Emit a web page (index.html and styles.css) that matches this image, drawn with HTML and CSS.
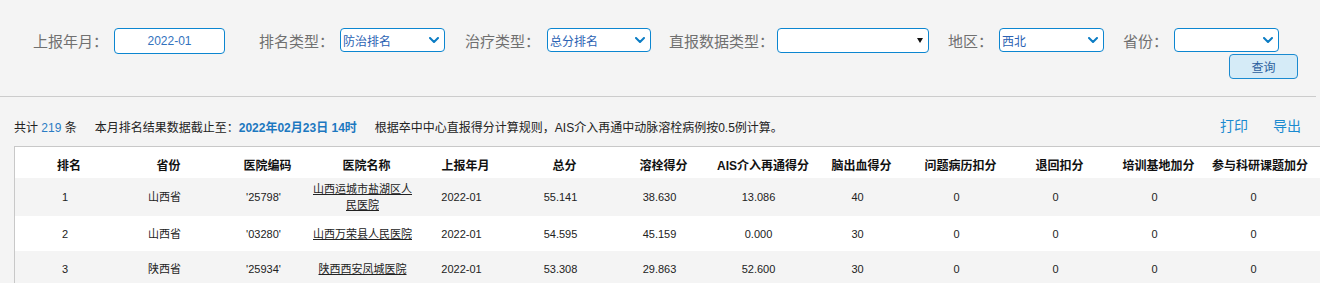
FILE: index.html
```html
<!DOCTYPE html>
<html lang="zh-CN">
<head>
<meta charset="utf-8">
<title>排名</title>
<link rel="stylesheet" href="styles.css">
</head>
<body>
<div class="filters">
  <div class="filter-row">
    <div class="field f1">
      <span class="label">上报年月：</span>
      <div class="input">2022-01</div>
    </div>
    <div class="field f2">
      <span class="label">排名类型：</span>
      <div class="select"><span class="sel-text">防治排名</span><svg class="chev" width="10" height="6" viewBox="0 0 10 6"><path d="M1 1 L5 5 L9 1" /></svg></div>
    </div>
    <div class="field f3">
      <span class="label">治疗类型：</span>
      <div class="select"><span class="sel-text">总分排名</span><svg class="chev" width="10" height="6" viewBox="0 0 10 6"><path d="M1 1 L5 5 L9 1" /></svg></div>
    </div>
    <div class="field f4">
      <span class="label">直报数据类型：</span>
      <div class="select select-wide"><span class="sel-text"></span><svg class="tri" width="6" height="5" viewBox="0 0 6 5"><polygon points="0,0 6,0 3,5" /></svg></div>
    </div>
    <div class="field f5">
      <span class="label">地区：</span>
      <div class="select"><span class="sel-text">西北</span><svg class="chev" width="10" height="6" viewBox="0 0 10 6"><path d="M1 1 L5 5 L9 1" /></svg></div>
    </div>
    <div class="field f6">
      <span class="label">省份：</span>
      <div class="select"><span class="sel-text"></span><svg class="chev" width="10" height="6" viewBox="0 0 10 6"><path d="M1 1 L5 5 L9 1" /></svg></div>
    </div>
  </div>
  <div class="btn-row"><button class="btn">查询</button></div>
</div>

<div class="info">
  <span class="total">共计 <span class="num">219</span> 条</span>
  <span class="deadline">本月排名结果数据截止至：<b class="date">2022年02月23日 14时</b></span>
  <span class="rule">根据卒中中心直报得分计算规则，AIS介入再通中动脉溶栓病例按0.5例计算。</span>
  <span class="actions"><a class="act">打印</a><a class="act">导出</a></span>
</div>

<div class="table-wrap">
  <table class="rank">
    <colgroup>
      <col class="c-first">
      <col class="c"><col class="c"><col class="c"><col class="c"><col class="c"><col class="c">
      <col class="c"><col class="c"><col class="c"><col class="c"><col class="c"><col class="c">
      <col>
    </colgroup>
    <thead>
      <tr class="head">
        <th>排名</th><th>省份</th><th>医院编码</th><th>医院名称</th><th>上报年月</th><th>总分</th><th>溶栓得分</th><th>AIS介入再通得分</th><th>脑出血得分</th><th>问题病历扣分</th><th>退回扣分</th><th>培训基地加分</th><th>参与科研课题加分</th><th></th>
      </tr>
    </thead>
    <tbody>
      <tr class="odd">
        <td>1</td><td>山西省</td><td>'25798'</td><td><a class="hosp">山西运城市盐湖区人民医院</a></td><td>2022-01</td><td>55.141</td><td>38.630</td><td>13.086</td><td>40</td><td>0</td><td>0</td><td>0</td><td>0</td><td></td>
      </tr>
      <tr>
        <td>2</td><td>山西省</td><td>'03280'</td><td><a class="hosp">山西万荣县人民医院</a></td><td>2022-01</td><td>54.595</td><td>45.159</td><td>0.000</td><td>30</td><td>0</td><td>0</td><td>0</td><td>0</td><td></td>
      </tr>
      <tr class="odd">
        <td>3</td><td>陕西省</td><td>'25934'</td><td><a class="hosp">陕西西安凤城医院</a></td><td>2022-01</td><td>53.308</td><td>29.863</td><td>52.600</td><td>30</td><td>0</td><td>0</td><td>0</td><td>0</td><td></td>
      </tr>
    </tbody>
  </table>
</div>
</body>
</html>
```

FILE: styles.css
```css
html, body {
  margin: 0;
  padding: 0;
  overflow: hidden;
}
body {
  background: #f4f4f4;
  font-family: "Liberation Sans", "Noto Sans CJK SC", sans-serif;
  color: #333;
}

/* ---------- filters ---------- */
.filters {
  padding: 28px 18px 17px 0;
  margin-right: 4px;
  border-bottom: 1px solid #cccccc;
}
.filter-row {
  display: flex;
  align-items: flex-start;
  padding-left: 33px;
  height: 26px;
}
.field {
  display: flex;
  align-items: flex-start;
  gap: 6px;
}
.f2 { margin-left: 34px; }
.f3 { margin-left: 20px; gap: 7px; }
.f4 { margin-left: 18px; gap: 3px; }
.f5 { margin-left: 19px; }
.f6 { margin-left: 19px; }

.label {
  font-family: "Noto Sans CJK TC", "Noto Sans CJK SC", sans-serif;
  font-size: 15px;
  line-height: 26px;
  color: #707070;
  white-space: nowrap;
}
.input {
  box-sizing: border-box;
  width: 111px;
  height: 26px;
  border: 1px solid #0c86d0;
  border-radius: 4px;
  background: #fff;
  font-size: 12px;
  line-height: 24px;
  text-align: center;
  color: #3272bd;
}
.select {
  box-sizing: border-box;
  width: 105px;
  height: 24px;
  border: 1px solid #0c86d0;
  border-radius: 4px;
  background: #fff;
  display: flex;
  align-items: center;
  justify-content: space-between;
  padding: 0 5px 0 2px;
}
.f3 .select { width: 104px; }
.select-wide {
  width: 152px;
  height: 25px;
  padding-right: 5px;
}
.sel-text {
  font-size: 12px;
  color: #2b62b3;
  white-space: nowrap;
}
.chev path {
  fill: none;
  stroke: #0b7cc4;
  stroke-width: 2;
  stroke-linecap: round;
  stroke-linejoin: round;
}
.tri polygon { fill: #111; }

.btn-row {
  display: flex;
  justify-content: flex-end;
}
.btn {
  box-sizing: border-box;
  width: 69px;
  height: 25px;
  border: 1px solid #1a8ad0;
  border-radius: 4px;
  background: #d5ebf7;
  color: #2c5f9e;
  font-family: "Liberation Sans", "Noto Sans CJK SC", sans-serif;
  font-size: 12px;
  padding: 0;
}

/* ---------- info ---------- */
.info {
  display: flex;
  align-items: center;
  height: 20px;
  padding: 21px 19px 0 14px;
  font-size: 12px;
  line-height: 20px;
  color: #222;
  white-space: nowrap;
}
.num { color: #2a7cc4; }
.deadline { margin-left: 18px; }
.date { color: #1c78c0; font-weight: bold; }
.rule { margin-left: 18px; }
.actions {
  margin-left: auto;
  align-self: flex-start;
  line-height: 16px;
  display: flex;
  gap: 25px;
}
.act {
  font-size: 14px;
  color: #1a8ad0;
  cursor: pointer;
}

/* ---------- table ---------- */
.table-wrap {
  margin: 8px 0 0 14px;
  border-top: 1px solid #c8c8c8;
  border-left: 1px solid #c8c8c8;
  background: #fff;
}
.rank {
  width: 100%;
  border-collapse: collapse;
  table-layout: fixed;
}
.c-first { width: 100px; }
.c { width: 99px; }
.head { height: 31px; }
.rank th {
  font-size: 12px;
  font-weight: bold;
  color: #111;
  text-align: center;
  white-space: nowrap;
  padding: 3px 0 0 8px;
  vertical-align: middle;
}
.rank tbody tr { height: 35px; }
.rank td {
  font-size: 11px;
  line-height: 16px;
  color: #222;
  text-align: center;
  padding: 3px 0;
  vertical-align: middle;
}
.rank tr.odd { background: #f4f4f4; }
.hosp {
  color: #222;
  text-decoration: underline;
  cursor: pointer;
}
```
